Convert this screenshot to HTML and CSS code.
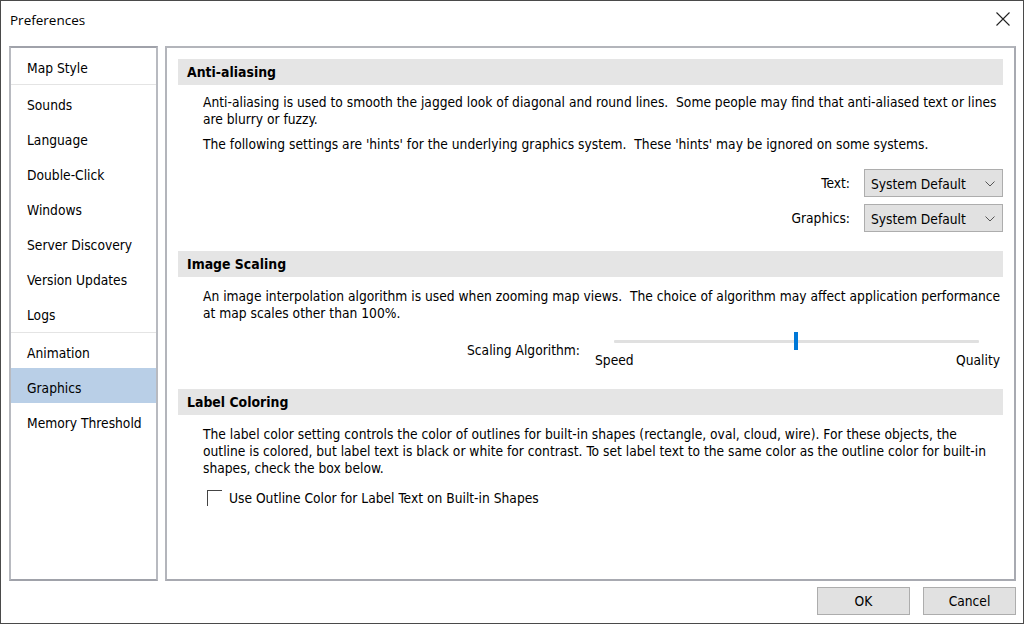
FILE: index.html
```html
<!DOCTYPE html>
<html>
<head>
<meta charset="utf-8">
<link rel="stylesheet" href="styles.css">
</head>
<body>
<div class="window">
  <div class="titlebar">
    <span class="title">Preferences</span>
    <svg class="close" width="16" height="16" viewBox="0 0 16 16"><path d="M1.5 1.5 L14.5 14.5 M14.5 1.5 L1.5 14.5" stroke="#222" stroke-width="1.1" fill="none"/></svg>
  </div>
  <div class="main">
    <ul class="sidebar">
      <li class="item first sep">Map Style</li>
      <li class="item">Sounds</li>
      <li class="item">Language</li>
      <li class="item">Double-Click</li>
      <li class="item">Windows</li>
      <li class="item">Server Discovery</li>
      <li class="item">Version Updates</li>
      <li class="item last sep">Logs</li>
      <li class="item">Animation</li>
      <li class="item selected">Graphics</li>
      <li class="item">Memory Threshold</li>
    </ul>
    <div class="panel">
      <div class="section">
        <div class="header">Anti-aliasing</div>
        <p class="para">Anti-aliasing is used to smooth the jagged look of diagonal and round lines.&nbsp; Some people may find that anti-aliased text or lines are blurry or fuzzy.</p>
        <p class="para second">The following settings are 'hints' for the underlying graphics system.&nbsp; These 'hints' may be ignored on some systems.</p>
        <div class="formrows">
          <div class="formrow"><span class="lbl">Text:</span><div class="select"><span>System Default</span><svg width="10" height="6" viewBox="0 0 10 6"><path d="M0.5 0.5 L5 5 L9.5 0.5" stroke="#555" fill="none"/></svg></div></div>
          <div class="formrow"><span class="lbl">Graphics:</span><div class="select"><span>System Default</span><svg width="10" height="6" viewBox="0 0 10 6"><path d="M0.5 0.5 L5 5 L9.5 0.5" stroke="#555" fill="none"/></svg></div></div>
        </div>
      </div>
      <div class="section">
        <div class="header">Image Scaling</div>
        <p class="para lower">An image interpolation algorithm is used when zooming map views.&nbsp; The choice of algorithm may affect application performance at map scales other than 100%.</p>
        <div class="sliderrow">
          <span class="lbl slbl">Scaling Algorithm:</span>
          <div class="slider">
            <div class="track"><div class="thumb"></div></div>
            <div class="ticks"><span>Speed</span><span>Quality</span></div>
          </div>
        </div>
      </div>
      <div class="section">
        <div class="header">Label Coloring</div>
        <p class="para lower">The label color setting controls the color of outlines for built-in shapes (rectangle, oval, cloud, wire). For these objects, the outline is colored, but label text is black or white for contrast. To set label text to the same color as the outline color for built-in shapes, check the box below.</p>
        <label class="check"><span class="box"></span>Use Outline Color for Label Text on Built-in Shapes</label>
      </div>
    </div>
  </div>
  <div class="buttons">
    <button class="btn">OK</button>
    <button class="btn">Cancel</button>
  </div>
</div>
</body>
</html>
```

FILE: styles.css
```css
* { box-sizing: border-box; }
html, body { margin: 0; padding: 0; background: #fff; }
body { font-family: "DejaVu Sans Condensed", "DejaVu Sans", sans-serif; font-size: 13.7px; color: #000; }
.window {
  width: 1024px; height: 624px;
  border: 1px solid #4a4a4a;
  background: #fff;
  display: flex; flex-direction: column;
}
.titlebar {
  height: 45px; display: flex; align-items: flex-start; justify-content: space-between;
  padding: 10px 12px 0 9px;
}
.title { font-family: "Open Sans", "Noto Sans", sans-serif; font-size: 13.5px; color: #000; }
.close { margin-top: 0px; }
.main { display: flex; gap: 7px; padding: 0 7px 0 8px; height: 535px; }
.sidebar {
  list-style: none; margin: 0; padding: 0;
  width: 149px; height: 100%;
  border: 2px solid #a4a6ad;
  border-color: #a0a2aa #b8bac0 #a0a2aa #b8bac0;
}
.item { height: 35px; line-height: 30px; padding: 5px 0 0 16px; }
.item.first { height: 37px; padding-top: 5px; }
.item.last { height: 38px; }
.item.sep { border-bottom: 1px solid #e4e4e4; }
.item.selected { background: #b9cfe7; }
.panel {
  flex: 1; height: 100%;
  border: 2px solid #b3b5bb;
  border-color: #b3b5bb #a8aab1 #a8aab1 #b3b5bb;
  padding: 11px 11px 0 11px;
}
.section { margin-bottom: 19px; }
.header {
  background: #e5e5e5; height: 26px; line-height: 26px;
  padding-left: 9px; font-weight: bold; font-size: 13.9px;
}
.para { margin: 9px 0 0 25px; line-height: 17px; }
.para.second { margin-top: 8px; }
.para.lower { margin-top: 11px; }
.formrows { display: flex; flex-direction: column; gap: 7px; align-items: flex-end; margin-top: 16px; }
.formrow { display: flex; align-items: center; gap: 14px; }
.lbl { color: #000; }
.select {
  width: 139px; height: 28px; background: #e1e1e1; border: 1px solid #adadad;
  display: flex; align-items: center; justify-content: space-between; padding: 1px 7px 0 6px;
}
.sliderrow { display: flex; align-items: flex-start; margin-top: 10px; padding-left: 289px; }
.slbl { margin-top: 10px; width: 128px; }
.slider { flex: 1; }
.track { position: relative; height: 3px; background: #e0e0e0; margin: 8px 24px 0 19px; border-radius: 1px; }
.thumb { position: absolute; left: 180px; top: -8px; width: 4px; height: 18px; background: #0078d7; }
.ticks { display: flex; justify-content: space-between; margin: 9px 3px 0 0; }
.section:nth-child(2) { margin-bottom: 21px; }
.check { display: flex; align-items: flex-start; gap: 7px; margin: 13px 0 0 29px; line-height: 17px; }
.box { width: 15px; height: 16px; border-top: 1px solid #444; border-left: 1px solid #444; }
.buttons { display: flex; justify-content: flex-end; gap: 13px; padding: 6px 7px 0 0; }
.btn {
  width: 93px; height: 28px; background: #e1e1e1; border: 1px solid #adadad;
  font-family: "DejaVu Sans Condensed", "DejaVu Sans", sans-serif; font-size: 13.7px; color: #000; padding: 0;
}
```
